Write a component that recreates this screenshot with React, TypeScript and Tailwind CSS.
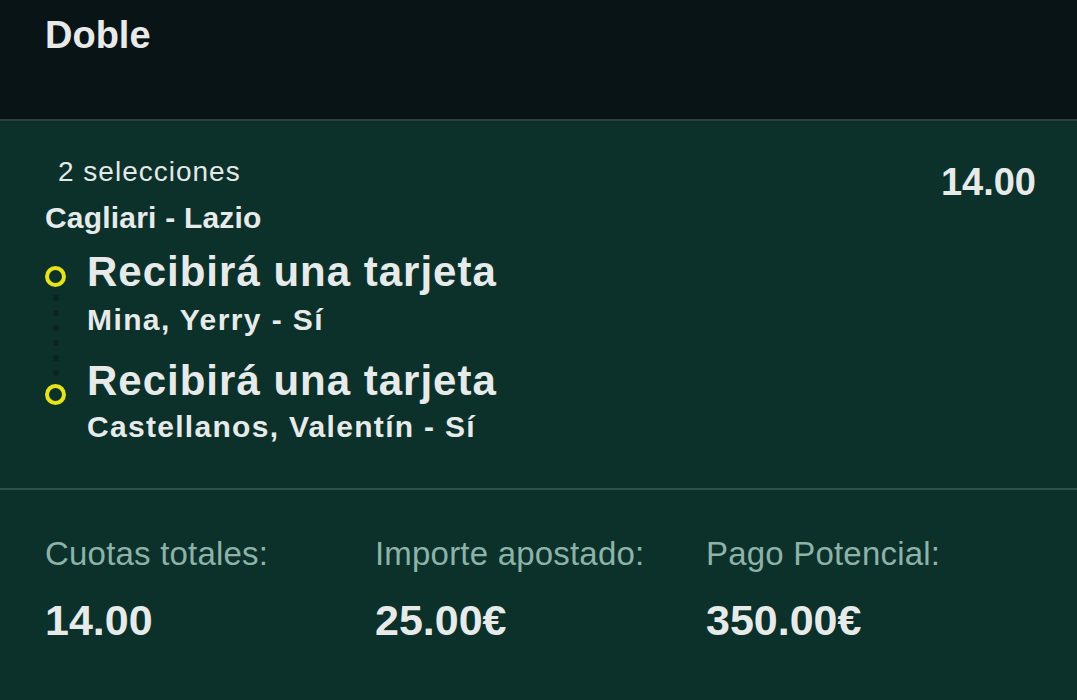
import React from "react";

const font = { fontFamily: '"Liberation Sans", Arial, Helvetica, sans-serif' };

function Ring() {
  return <div className="w-[21px] h-[21px] rounded-full border-[4px] border-[#e6e21b] shrink-0" />;
}

function Dot() {
  return <div className="w-[6px] h-[6px] rounded-full bg-[#0a2521]" />;
}

export default function App() {
  return (
    <div className="w-[1077px] h-[700px] overflow-hidden bg-[#0c302a] text-[#e6ebea]" style={font}>
      <div className="h-[121px] bg-[#081416] border-b-2 border-[#333d3b] pl-[45px] pt-[16px]">
        <div className="text-[38px] leading-none font-bold text-[#e8eaea]">Doble</div>
      </div>

      <div className="h-[369px] border-b-2 border-[#2f4f48] pl-[45px] pr-[41px] pt-[37px] flex justify-between items-start">
        <div className="flex flex-col">
          <div className="pl-[13px] text-[28px] leading-none text-[#e2e9e7] tracking-[1px]">2 selecciones</div>
          <div className="mt-[17px] text-[30px] leading-none font-bold tracking-[0.2px]">Cagliari - Lazio</div>
          <div className="mt-[18px] flex gap-[21px]">
            <div className="flex flex-col items-center pt-[15px] w-[21px]">
              <Ring />
              <div className="mt-[8px] flex flex-col gap-[9px]">
                <Dot />
                <Dot />
                <Dot />
                <Dot />
                <Dot />
                <Dot />
              </div>
              <div className="mt-[8px]">
                <Ring />
              </div>
            </div>
            <div className="flex flex-col">
              <div className="text-[42px] leading-none font-bold tracking-[1px]">Recibirá una tarjeta</div>
              <div className="mt-[12px] text-[30px] leading-none font-bold tracking-[1.4px]">Mina, Yerry - Sí</div>
              <div className="mt-[25px] text-[42px] leading-none font-bold tracking-[1px]">Recibirá una tarjeta</div>
              <div className="mt-[10px] text-[30px] leading-none font-bold tracking-[1.3px]">Castellanos, Valentín - Sí</div>
            </div>
          </div>
        </div>
        <div className="mt-[5px] text-[38px] leading-none font-bold">14.00</div>
      </div>

      <div className="pl-[45px] pt-[47px] grid grid-cols-[330px_331px_1fr]">
        {[
          ["Cuotas totales:", "14.00"],
          ["Importe apostado:", "25.00€"],
          ["Pago Potencial:", "350.00€"],
        ].map(([l, v]) => (
          <div key={l} className="flex flex-col">
            <div className="text-[33px] leading-none text-[#8db3a9] tracking-[0.2px]">{l}</div>
            <div className="mt-[29px] text-[43px] leading-none font-bold">{v}</div>
          </div>
        ))}
      </div>
    </div>
  );
}
